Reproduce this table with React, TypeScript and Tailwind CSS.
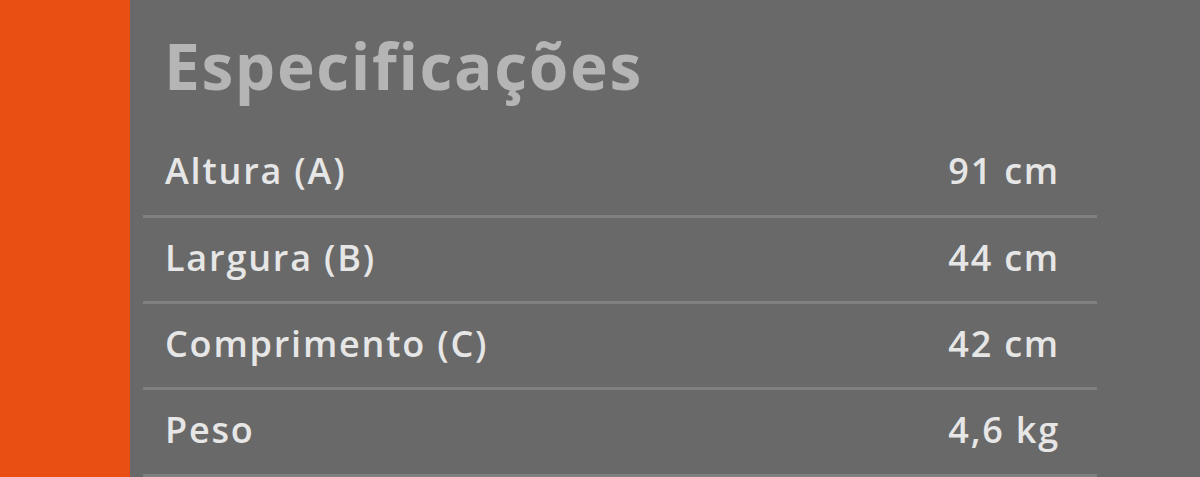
import React from "react";

const rows = [
  ["Altura (A)", "91 cm", "h-[87px]"],
  ["Largura (B)", "44 cm", "h-[86px]"],
  ["Comprimento (C)", "42 cm", "h-[86px]"],
  ["Peso", "4,6 kg", "h-[87px]"],
];

export default function App() {
  return (
    <div className="flex w-[1200px] h-[477px] overflow-hidden bg-[#696969]">
      <div className="w-[130px] shrink-0 bg-[#e94e12]" />
      <div className="flex flex-col pl-[13px] w-[967px]">
        <h1
          className="h-[131px] shrink-0 pl-[21px] pt-[26px] text-[64px] leading-[80px] font-bold text-[#b5b5b5] tracking-[1.6px]"
          style={{ fontFamily: '"Open Sans", sans-serif' }}
        >
          Especificações
        </h1>
        {rows.map(([k, v, h]) => (
          <div
            key={k}
            className={`flex shrink-0 items-center justify-between pl-[22px] pr-[37px] ${h} pb-[4px] border-b-[3px] border-[#808080] text-[36px] font-semibold text-[#e6e6e6] tracking-[1.8px]`}
            style={{ fontFamily: '"Open Sans", sans-serif' }}
          >
            <span>{k}</span>
            <span>{v}</span>
          </div>
        ))}
      </div>
    </div>
  );
}
